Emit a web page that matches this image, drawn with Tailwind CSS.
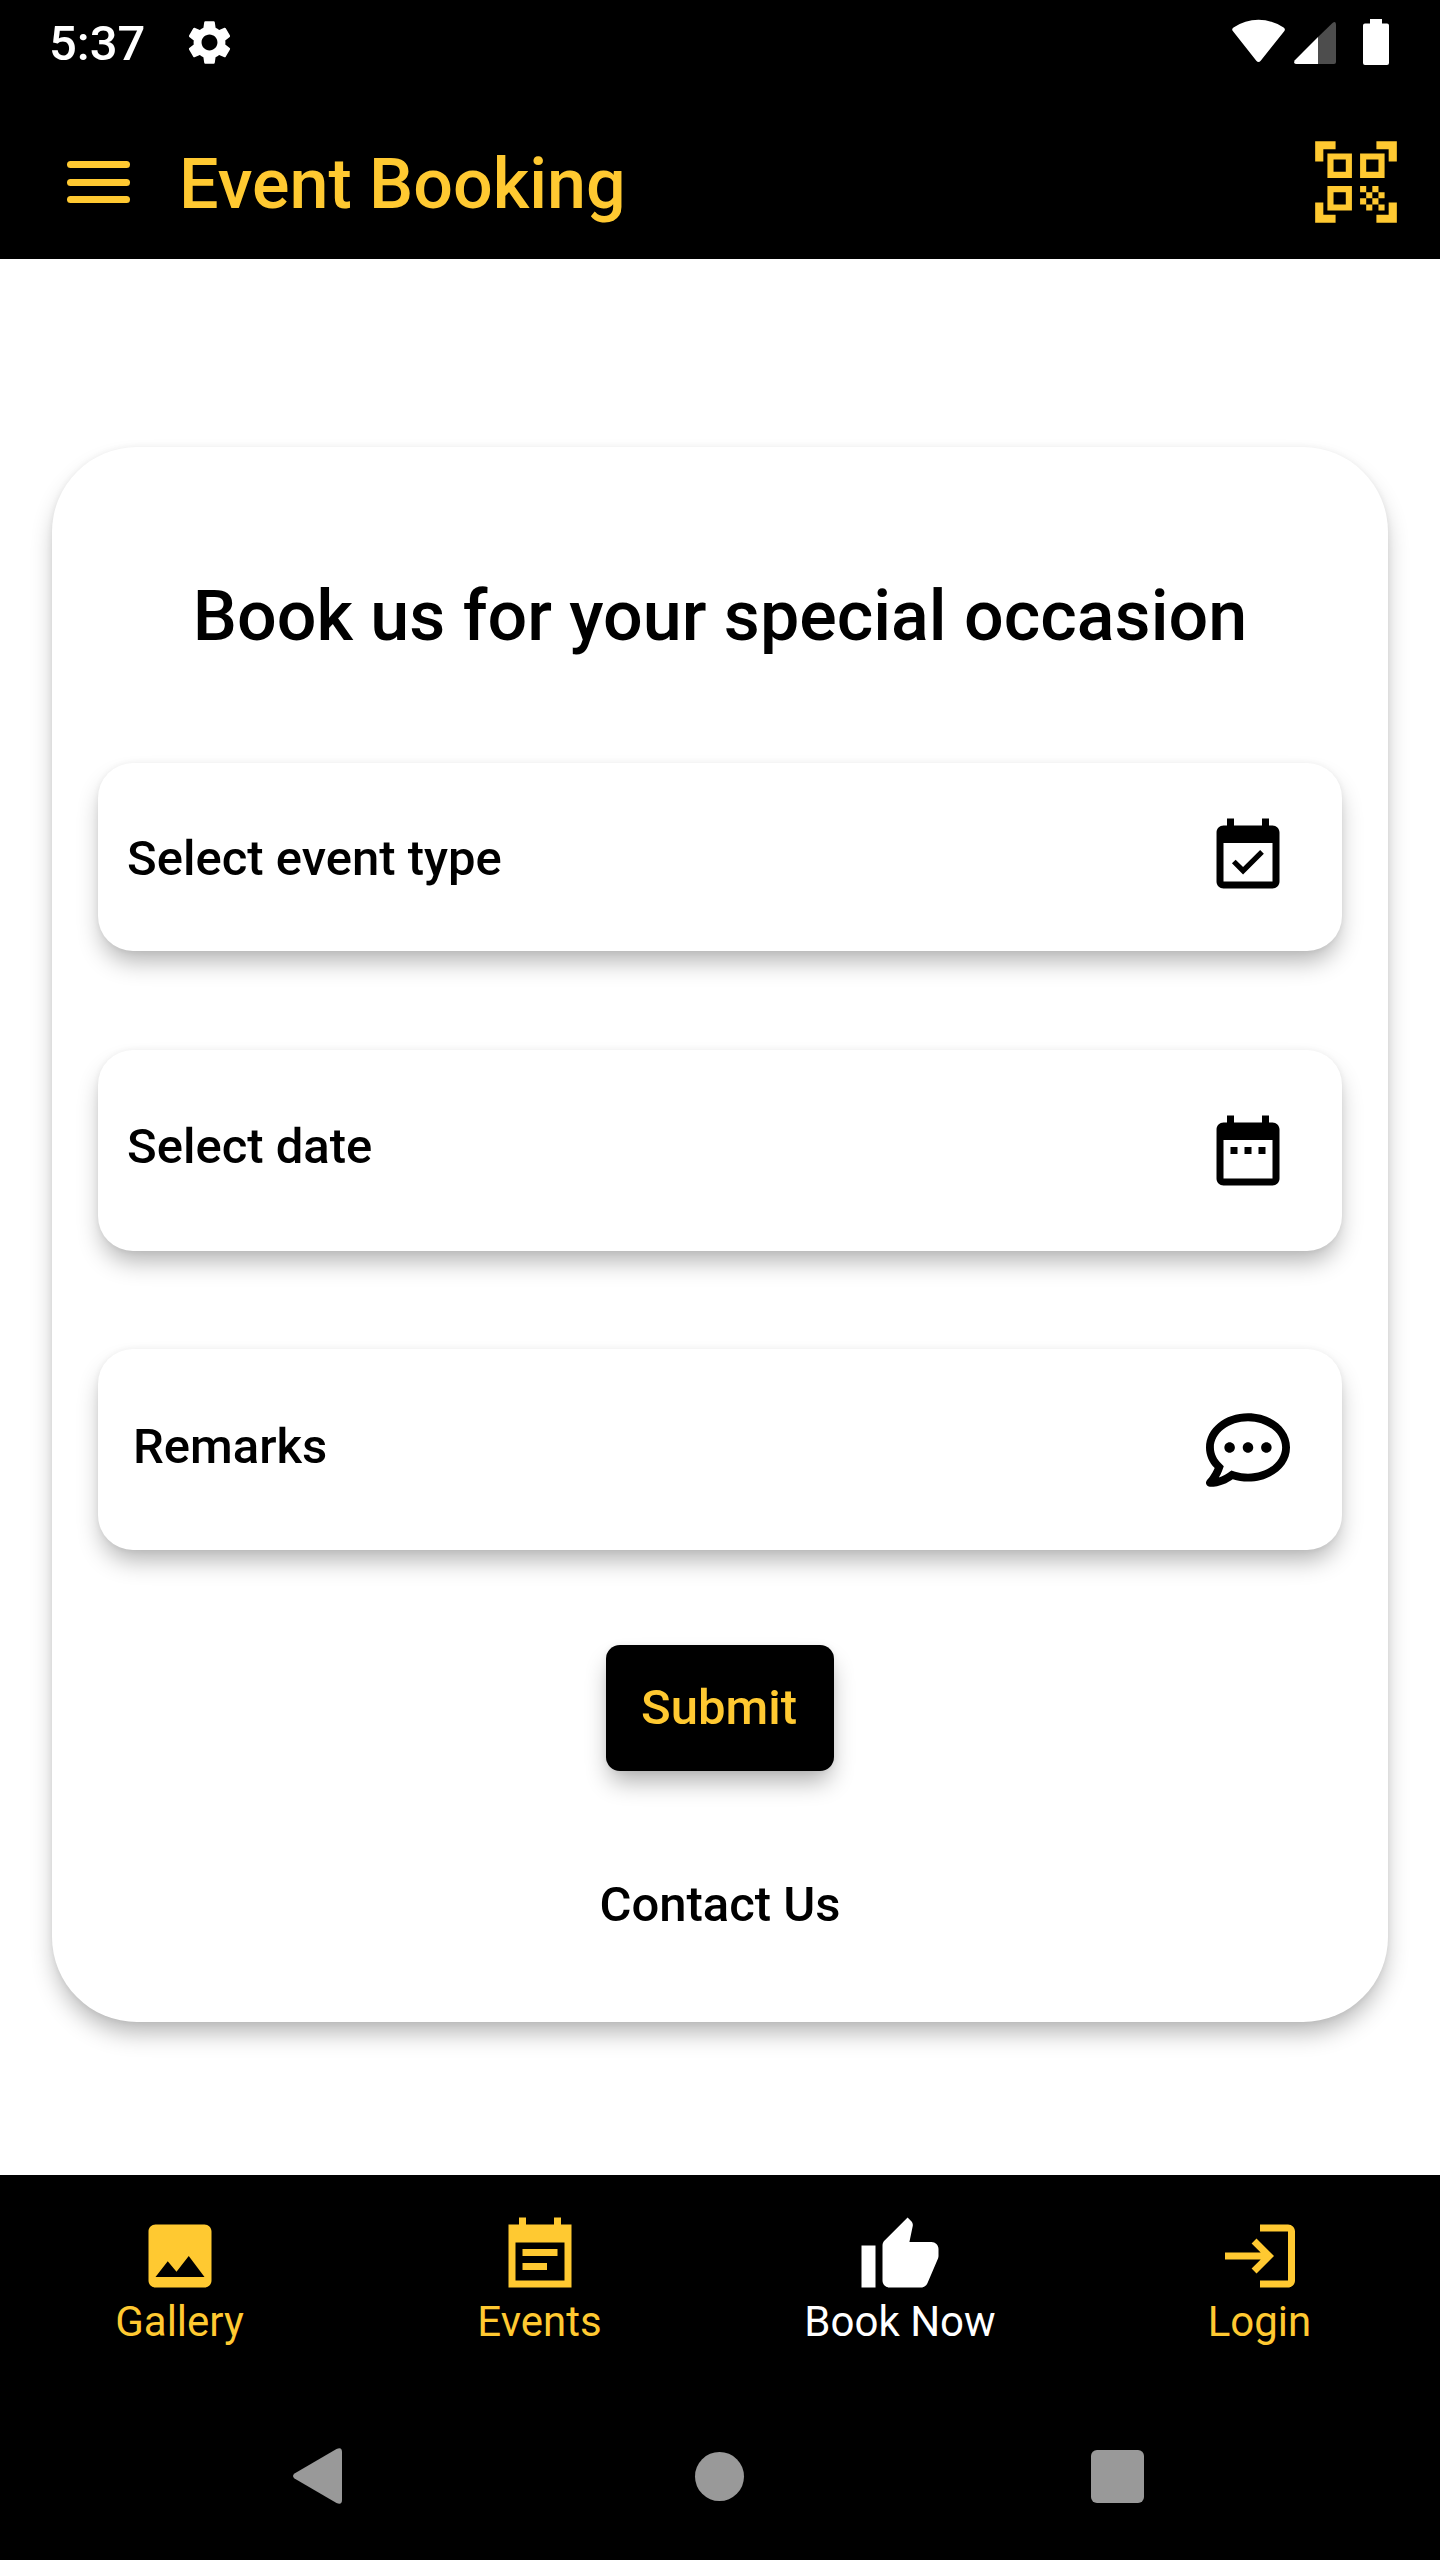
<!DOCTYPE html>
<html lang="en">
<head>
<meta charset="utf-8">
<title>Event Booking</title>
<script src="https://cdn.jsdelivr.net/npm/@tailwindcss/browser@4"></script>
</head>
<body class="flex h-[2560px] w-[1440px] flex-col overflow-hidden bg-white font-['Roboto',sans-serif] text-black">
  <header class="h-[259px] shrink-0 bg-black">
    <div class="flex h-[88px] items-center justify-between pl-[49px] pr-[51px] text-white">
      <div class="flex items-center gap-[38px]">
        <span class="text-[49px] leading-[90px] font-medium">5:37</span>
        <svg class="-mt-1 size-[53px]" viewBox="0 0 24 24" fill="currentColor"><path d="M19.14 12.94c.04-.3.06-.61.06-.94 0-.32-.02-.64-.07-.94l2.03-1.58c.18-.14.23-.41.12-.61l-1.92-3.32c-.12-.22-.37-.29-.59-.22l-2.39.96c-.5-.38-1.03-.7-1.62-.94l-.36-2.54c-.04-.24-.24-.41-.48-.41h-3.84c-.24 0-.43.17-.47.41l-.36 2.54c-.59.24-1.13.57-1.62.94l-2.39-.96c-.22-.08-.47 0-.59.22L2.74 8.87c-.12.21-.08.47.12.61l2.03 1.58c-.05.3-.09.63-.09.94s.02.64.07.94l-2.03 1.58c-.18.14-.23.41-.12.61l1.92 3.32c.12.22.37.29.59.22l2.39-.96c.5.38 1.03.7 1.62.94l.36 2.54c.05.24.24.41.48.41h3.84c.24 0 .44-.17.47-.41l.36-2.54c.59-.24 1.13-.56 1.62-.94l2.39.96c.22.08.47 0 .59-.22l1.92-3.32c.12-.22.07-.47-.12-.61l-2.01-1.58zM12 15.6c-1.98 0-3.6-1.62-3.6-3.6s1.62-3.6 3.6-3.6 3.6 1.62 3.6 3.6-1.62 3.6-3.6 3.6z"/></svg>
      </div>
      <svg class="h-[46px] w-[157px] -mt-1" viewBox="1232 19 157 46" fill="currentColor">
        <path d="M1233.2 31.5Q1231 29.3 1233.5 27.6Q1245 19.8 1258.5 19.8T1283.6 27.6Q1286 29.3 1284 31.5L1260.7 60.8Q1258.5 63.2 1256.3 60.8Z"/>
        <path d="M1318 64V37L1332.500 22.900Q1336 20.500 1336 24.500V62Q1336 64 1334 64Z" fill="#4d4d4d"/>
        <path d="M1318 64V37L1294.800 60.200Q1292.800 64 1296.500 64Z"/>
        <path d="M1370 19H1382V23.500H1387Q1389 23.500 1389 25.500V63Q1389 65 1387 65H1365Q1363 65 1363 63V25.500Q1363 23.500 1365 23.500H1370Z"/>
      </svg>
    </div>
    <div class="flex h-[188px] items-center pl-[67px] pr-[35px] text-[#ffc931]">
      <div class="flex w-[63px] flex-col gap-[10.5px]">
        <span class="h-[7px] rounded-full bg-current"></span>
        <span class="h-[7px] rounded-full bg-current"></span>
        <span class="h-[7px] rounded-full bg-current"></span>
      </div>
      <h1 class="ml-[49px] mt-1 grow text-[70px] leading-[82px] font-medium">Event Booking</h1>
      <svg class="size-[98px]" viewBox="0 0 24 24" fill="currentColor"><path d="M9.5 6.500v3h-3v-3h3M11 5H5v6h6V5zM9.500 14.500v3h-3v-3h3M11 13H5v6h6v-6zM17.500 6.500v3h-3v-3h3M19 5h-6v6h6V5zM13 13h1.500v1.500H13V13zM14.500 14.500H16V16h-1.500v-1.500zM16 13h1.500v1.500H16V13zM13 16h1.500v1.500H13V16zM14.500 17.500H16V19h-1.500v-1.500zM16 16h1.500v1.500H16V16zM17.500 14.500H19V16h-1.500v-1.500zM17.500 17.500H19V19h-1.500v-1.500zM22 7h-2V4h-3V2h5v5zM22 22v-5h-2v3h-3v2h5zM2 22h5v-2H4v-3H2v5zM2 2v5h2V4h3V2H2z"/></svg>
    </div>
  </header>

  <main class="grow px-[52px] pt-[188px]">
    <section class="flex h-[1575px] flex-col items-center rounded-[85px] px-[46px] pt-32 shadow-[0_14px_24px_-4px_rgba(0,0,0,0.3),0_0_6px_rgba(0,0,0,0.06)]">
      <h2 class="text-[70px] leading-[82px] font-medium">Book us for your special occasion</h2>
      <div class="mt-[106px] flex h-[188px] w-[1244px] items-center justify-between rounded-[35px] pl-[29px] pr-[52px] shadow-[0_14px_24px_-4px_rgba(0,0,0,0.3),0_0_6px_rgba(0,0,0,0.06)]">
        <span class="mt-[3px] text-[49px] leading-[58px] font-medium">Select event type</span>
        <svg class="size-[84px]" viewBox="0 0 24 24"><path d="M16.530 11.060L15.470 10l-4.880 4.880-2.120-2.120-1.060 1.060L10.590 17l5.940-5.940zM19 3h-1V1h-2v2H8V1H6v2H5c-1.110 0-1.990.9-1.990 2L3 19c0 1.100.89 2 2 2h14c1.100 0 2-.9 2-2V5c0-1.100-.9-2-2-2zm0 16H5V8h14v11z"/></svg>
      </div>
      <div class="mt-[99px] flex h-[201px] w-[1244px] items-center justify-between rounded-[35px] pl-[29px] pr-[52px] shadow-[0_14px_24px_-4px_rgba(0,0,0,0.3),0_0_6px_rgba(0,0,0,0.06)]">
        <span class="mb-[7px] text-[49px] leading-[58px] font-medium">Select date</span>
        <svg class="mt-[6px] size-[84px]" viewBox="0 0 24 24"><path d="M9 10H7v2h2v-2zm4 0h-2v2h2v-2zm4 0h-2v2h2v-2zm2-7h-1V1h-2v2H8V1H6v2H5c-1.110 0-1.990.9-1.990 2L3 19c0 1.100.89 2 2 2h14c1.100 0 2-.9 2-2V5c0-1.100-.9-2-2-2zm0 16H5V8h14v11z"/></svg>
      </div>
      <div class="mt-[98px] flex h-[201px] w-[1244px] items-center justify-between rounded-[35px] pl-[35px] pr-[52px] shadow-[0_14px_24px_-4px_rgba(0,0,0,0.3),0_0_6px_rgba(0,0,0,0.06)]">
        <span class="mb-[6px] text-[49px] leading-[58px] font-medium">Remarks</span>
        <svg class="size-[84px]" viewBox="0 0 512 512"><path d="M144 208c-17.700 0-32 14.300-32 32s14.300 32 32 32 32-14.300 32-32-14.300-32-32-32zm112 0c-17.700 0-32 14.300-32 32s14.300 32 32 32 32-14.300 32-32-14.300-32-32-32zm112 0c-17.700 0-32 14.300-32 32s14.300 32 32 32 32-14.300 32-32-14.300-32-32-32zM256 32C114.600 32 0 125.100 0 240c0 47.600 19.900 91.200 52.900 126.300C38 405.700 7 439.100 6.500 439.500c-6.600 7-8.400 17.200-4.600 26S14.400 480 24 480c61.500 0 110-25.700 139.100-46.300C192 442.800 223.200 448 256 448c141.400 0 256-93.100 256-208S397.400 32 256 32zm0 368c-26.700 0-53.100-4.100-78.400-12.100l-22.700-7.200-19.500 13.800c-14.300 10.100-33.900 21.400-57.500 29 7.300-12.100 14.400-25.700 19.900-40.200l10.600-28.100-20.600-21.800C69.700 314.100 48 282.200 48 240c0-88.200 93.300-160 208-160s208 71.800 208 160-93.300 160-208 160z"/></svg>
      </div>
      <button class="mt-[95px] h-[126px] w-[228px] rounded-[14px] bg-black pr-[2px] text-[49px] font-medium text-[#ffc931] shadow-[0_14px_24px_-4px_rgba(0,0,0,0.32),0_0_6px_rgba(0,0,0,0.06)]">Submit</button>
      <a class="mt-[105px] text-[49px] leading-[58px] font-medium">Contact Us</a>
    </section>
  </main>

  <nav class="grid h-[217px] shrink-0 grid-cols-4 bg-black pt-[39px] text-[42px] leading-[50px] text-[#ffc931]">
    <a class="flex flex-col items-center">
      <svg class="size-[84px]" viewBox="0 0 24 24" fill="currentColor"><path d="M21 19V5c0-1.100-.9-2-2-2H5c-1.100 0-2 .9-2 2v14c0 1.100.9 2 2 2h14c1.100 0 2-.9 2-2zM8.500 13.500l2.500 3.010L14.500 12l4.500 6H5l3.500-4.500z"/></svg>
      <span class="-mt-px pr-px">Gallery</span>
    </a>
    <a class="flex flex-col items-center">
      <svg class="size-[84px]" viewBox="0 0 24 24" fill="currentColor"><path fill-rule="evenodd" d="M3 3h3V1h2v2h8V1h2v2h3v18H3zM5 8.150V19h14V8.150zM7 10h10v2H7zM7 14h7v2H7z"/></svg>
      <span class="-mt-px pr-px">Events</span>
    </a>
    <a class="flex flex-col items-center text-white">
      <svg class="size-[84px]" viewBox="0 0 24 24" fill="currentColor"><path d="M1 21h4V9H1v12zm22-11c0-1.100-.9-2-2-2h-6.310l.95-4.570.03-.32c0-.41-.17-.79-.44-1.060L14.170 1 7.590 7.590C7.220 7.950 7 8.450 7 9v10c0 1.100.9 2 2 2h9c.83 0 1.540-.5 1.840-1.220l3.020-7.050c.09-.23.14-.47.14-.73v-2z"/></svg>
      <span class="-mt-px">Book Now</span>
    </a>
    <a class="flex flex-col items-center">
      <svg class="size-[84px]" viewBox="0 0 24 24" fill="currentColor"><path d="M11 7L9.600 8.400l2.600 2.600H2v2h10.200l-2.600 2.600L11 17l5-5-5-5zM20 19h-8v2h8c1.100 0 2-.9 2-2V5c0-1.100-.9-2-2-2h-8v2h8v14z"/></svg>
      <span class="-mt-px pr-px">Login</span>
    </a>
  </nav>
  <footer class="flex h-[168px] shrink-0 items-center bg-black pl-[293px] text-[#999999]">
    <svg class="h-[56px] w-[49px]" viewBox="0 0 49 56" fill="currentColor"><path d="M1.500 25.500L43.500 1Q49 -1.500 49 4V52Q49 57.500 43.500 55L1.500 30.500Q-1.500 28 1.500 25.500Z"/></svg>
    <span class="ml-[353px] size-[49px] rounded-full bg-current"></span>
    <span class="ml-[347px] size-[53px] rounded-[6px] bg-current"></span>
  </footer>
</body>
</html>
